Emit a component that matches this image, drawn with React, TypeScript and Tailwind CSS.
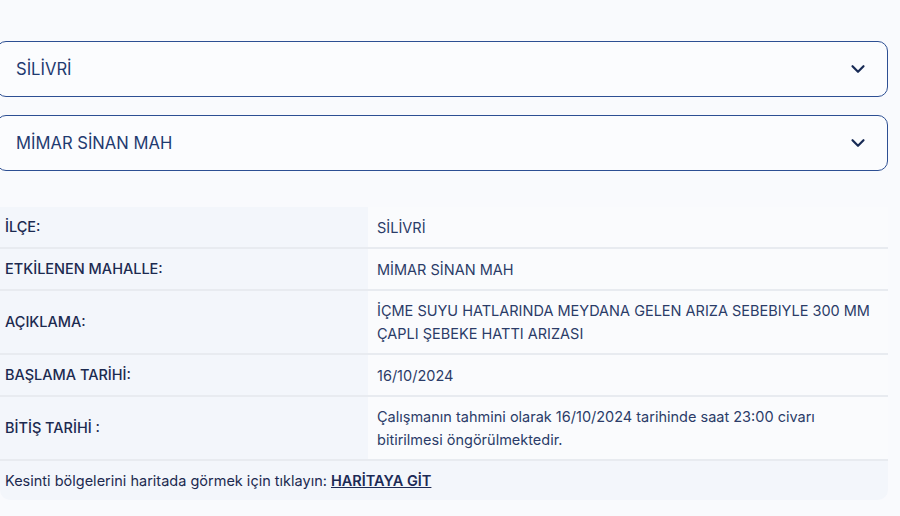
import { ChevronDown } from "lucide-react";

const rows = [
  { label: "İLÇE:", value: "SİLİVRİ" },
  { label: "ETKİLENEN MAHALLE:", value: "MİMAR SİNAN MAH" },
  {
    label: "AÇIKLAMA:",
    value: "İÇME SUYU HATLARINDA MEYDANA GELEN ARIZA SEBEBIYLE 300 MM ÇAPLI ŞEBEKE HATTI ARIZASI",
  },
  { label: "BAŞLAMA TARİHİ:", value: "16/10/2024" },
  {
    label: "BİTİŞ TARİHİ :",
    value: "Çalışmanın tahmini olarak 16/10/2024 tarihinde saat 23:00 civarı bitirilmesi öngörülmektedir.",
  },
];

function SelectBox({ value }: { value: string }) {
  return (
    <div className="h-[56px] flex items-center justify-between pl-[19px] pr-[18px] border border-[#2d4f93] rounded-[10px] bg-[#fbfcfe]">
      <span className="text-[16.6px] text-[#1f3a70]">{value}</span>
      <ChevronDown className="w-[22px] h-[22px] text-[#172a55]" strokeWidth={2.4} />
    </div>
  );
}

export default function App() {
  return (
    <div className="min-h-screen bg-[#f9fafd] pt-[41px] font-['Inter',sans-serif]">
      <div className="ml-[-4px] w-[892px] flex flex-col gap-[18px]">
        <SelectBox value="SİLİVRİ" />
        <SelectBox value="MİMAR SİNAN MAH" />
      </div>

      <div className="mt-[36px] w-[888px] rounded-b-[10px] bg-[#f3f6fb] overflow-hidden text-[14.5px]">
        {rows.map((row, i) => (
          <div key={i} className="flex min-h-[42px] border-b-2 border-[#e8ebf0]">
            <div className="w-[368px] shrink-0 flex items-center px-[5px] font-medium text-[#1c2a50]">
              {row.label}
            </div>
            <div className="flex-1 flex items-center bg-[#fafbfd] pl-[9px] pr-[14px] py-[8px] leading-[23px] text-[#2b3c68]">
              {row.value}
            </div>
          </div>
        ))}
        <div className="px-[5px] h-[39px] flex items-center text-[#1c2a50]">
          Kesinti bölgelerini haritada görmek için tıklayın:&nbsp;
          <a className="font-semibold underline text-[#1c2a55]">HARİTAYA GİT</a>
        </div>
      </div>
    </div>
  );
}
